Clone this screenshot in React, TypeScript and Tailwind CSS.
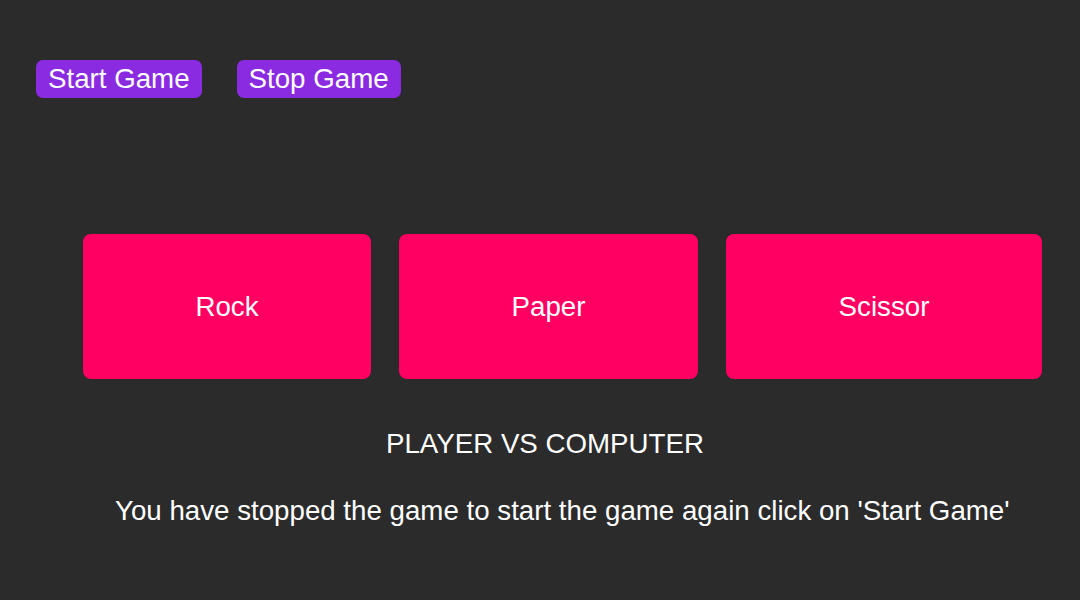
export default function App() {
  const font = { fontFamily: '"Liberation Sans", Arial, sans-serif' };
  return (
    <div className="w-[1080px] h-[600px] bg-[#2b2b2b] text-white text-[27.7px] leading-none overflow-hidden" style={font}>
      <div className="flex gap-[35px] pl-[36px] pt-[60px]">
        <button className="h-[38px] px-[12px] rounded-[7px] bg-[#8a2be2] text-white">Start Game</button>
        <button className="h-[38px] px-[12px] rounded-[7px] bg-[#8a2be2] text-white">Stop Game</button>
      </div>
      <div className="flex gap-[28px] pl-[83px] mt-[136px]">
        <div className="w-[288px] h-[145px] rounded-[8px] bg-[#ff0062] flex items-center justify-center">Rock</div>
        <div className="w-[299px] h-[145px] rounded-[8px] bg-[#ff0062] flex items-center justify-center">Paper</div>
        <div className="w-[316px] h-[145px] rounded-[8px] bg-[#ff0062] flex items-center justify-center">Scissor</div>
      </div>
      <div className="pl-[386px] mt-[51px] h-[28px] flex items-center">PLAYER VS COMPUTER</div>
      <div className="pl-[115px] mt-[39px] h-[28px] flex items-center">You have stopped the game to start the game again click on 'Start Game'</div>
    </div>
  );
}
